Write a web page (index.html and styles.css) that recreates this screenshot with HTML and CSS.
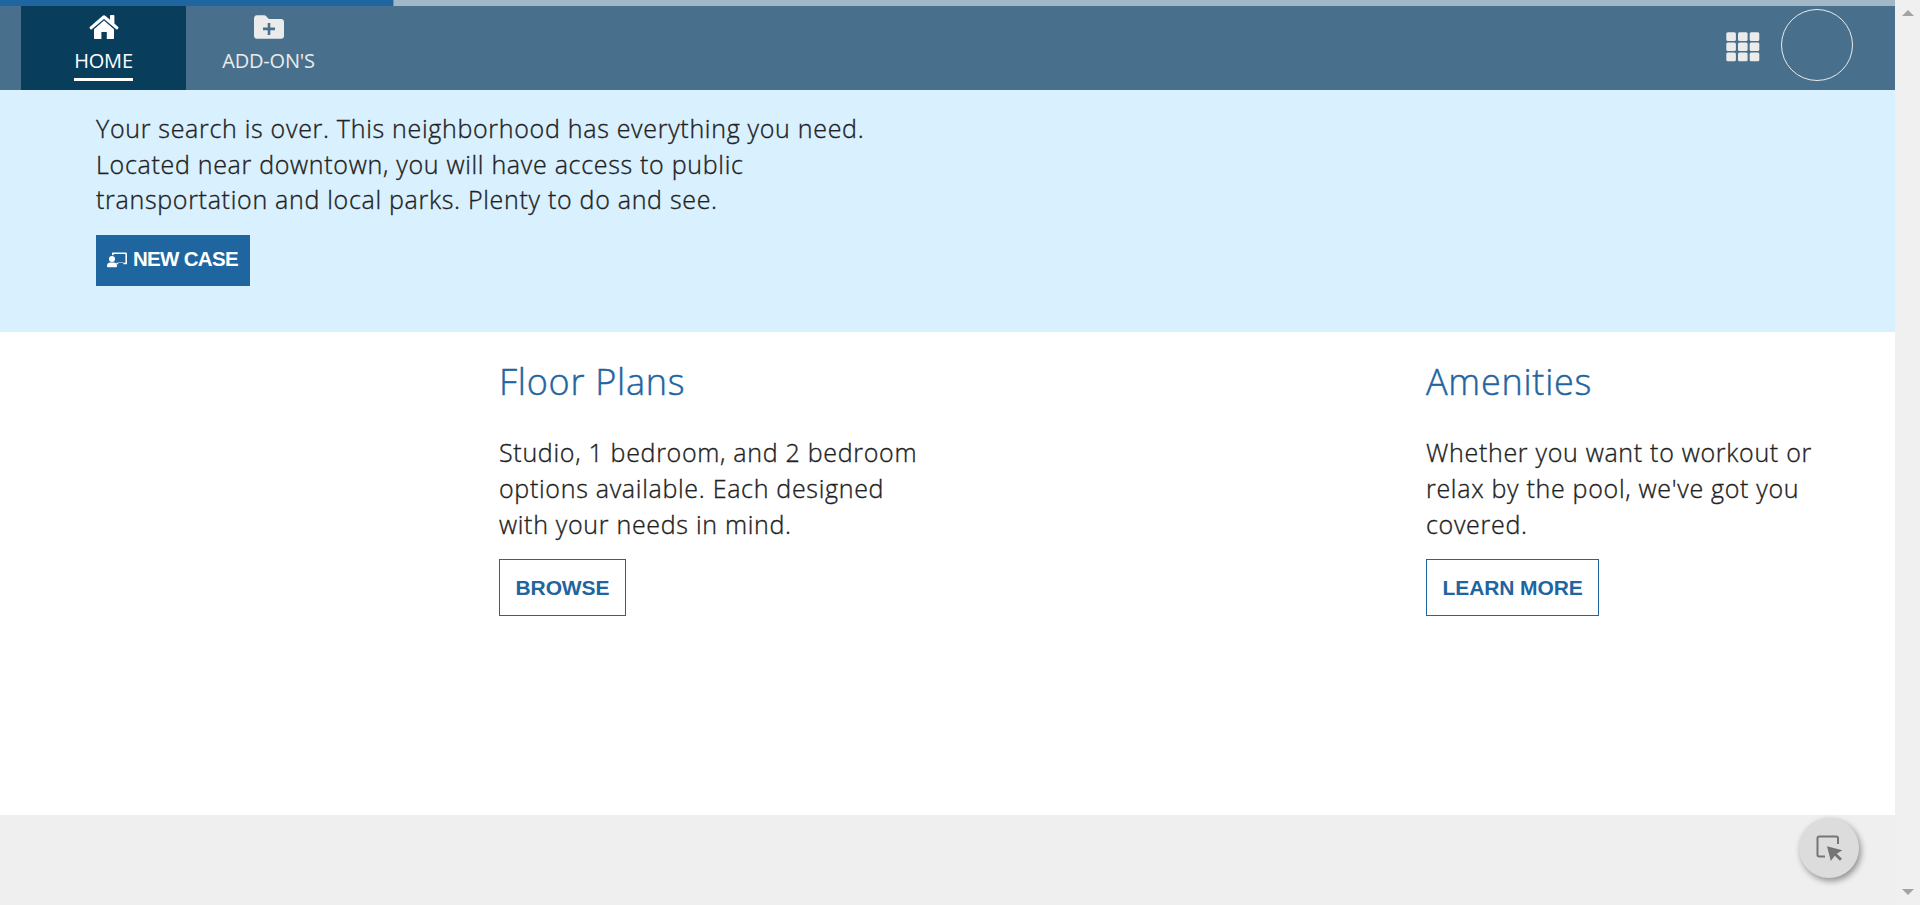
FILE: index.html
```html
<!DOCTYPE html>
<html lang="en">
<head>
<meta charset="utf-8">
<title>Home</title>
<link rel="stylesheet" href="styles.css">
</head>
<body>
<div class="page">
  <div class="progress"><div class="progress-bar"></div></div>
  <header class="nav">
    <nav class="tabs">
      <a class="tab tab-active">
        <svg class="tab-icon" width="30" height="24" viewBox="0 0 30 24" fill="currentColor"><path d="M15 0.2 Q15.8 0.2 16.6 0.9 L21 4.7 V0.8 Q21 0 21.8 0 H24.6 Q25.4 0 25.4 0.8 V8.6 L29.2 11.9 Q29.9 12.5 29.3 13.2 L28.5 14.2 Q27.9 14.9 27.2 14.3 L15 3.9 L2.8 14.3 Q2.1 14.9 1.5 14.2 L0.7 13.2 Q0.1 12.5 0.8 11.9 L13.4 0.9 Q14.2 0.2 15 0.2 Z"/><path d="M15 5.6 L25 14.2 V23.2 Q25 24 24.2 24 H17.8 V17 H12.4 V24 H5.8 Q5 24 5 23.2 V14.2 Z"/></svg>
        <span class="tab-label">HOME</span>
      </a>
      <a class="tab">
        <svg class="tab-icon" width="30" height="24" viewBox="0 0 30 24" fill="currentColor" fill-rule="evenodd"><path d="M3 0.3 H10.4 Q11.4 0.3 12 1 L14.8 4 H27 Q30 4 30 7 V20.7 Q30 23.7 27 23.7 H3 Q0 23.7 0 20.7 V3.3 Q0 0.3 3 0.3 Z M13.7 8 V12.5 H9 V15.2 H13.7 V20 H16.3 V15.2 H21 V12.5 H16.3 V8 Z"/></svg>
        <span class="tab-label">ADD-ON'S</span>
      </a>
    </nav>
    <div class="tools">
      <svg width="34" height="30" viewBox="0 0 34 30" fill="#ebebeb"><rect x="0.3" y="0.3" width="9.6" height="8.6" rx="1.5"/><rect x="12" y="0.3" width="9.6" height="8.6" rx="1.5"/><rect x="23.7" y="0.3" width="9.6" height="8.6" rx="1.5"/><rect x="0.3" y="10.4" width="9.6" height="8.6" rx="1.5"/><rect x="12" y="10.4" width="9.6" height="8.6" rx="1.5"/><rect x="23.7" y="10.4" width="9.6" height="8.6" rx="1.5"/><rect x="0.3" y="20.6" width="9.6" height="8.6" rx="1.5"/><rect x="12" y="20.6" width="9.6" height="8.6" rx="1.5"/><rect x="23.7" y="20.6" width="9.6" height="8.6" rx="1.5"/></svg>
      <div class="avatar"></div>
    </div>
  </header>
  <section class="hero">
    <p class="copy">Your search is over. This neighborhood has everything you need.<br>Located near downtown, you will have access to public<br>transportation and local parks. Plenty to do and see.</p>
    <button class="btn btn-primary">
      <svg width="20" height="16" viewBox="0 0 20 16" fill="currentColor"><path d="M5.5 0.5 H18.6 Q20 0.5 20 1.9 V12.2 H16.3 V10.3 H11.2 V12.2 H9.4 V10.8 H18.4 V2 H6.6 V3.6 Q6 3.1 5 3 V1 Q5 0.5 5.5 0.5 Z"/><circle cx="5" cy="7" r="3"/><path d="M3.3 10.6 H6.7 Q10 10.6 10 14.3 Q10 15.2 9.1 15.2 H0.9 Q0 15.2 0 14.3 Q0 10.6 3.3 10.6 Z"/></svg>
      <span>NEW CASE</span>
    </button>
  </section>
  <main class="features">
    <article class="feature">
      <h2 class="feature-title">Floor Plans</h2>
      <p class="copy">Studio, 1 bedroom, and 2 bedroom<br>options available. Each designed<br>with your needs in mind.</p>
      <button class="btn btn-outline">BROWSE</button>
    </article>
    <article class="feature">
      <h2 class="feature-title">Amenities</h2>
      <p class="copy">Whether you want to workout or<br>relax by the pool, we've got you<br>covered.</p>
      <button class="btn btn-outline">LEARN MORE</button>
    </article>
  </main>
  <footer class="footer">
    <div class="fab">
      <svg width="27" height="27" viewBox="0 0 27 27"><path d="M9 21.5 H3.2 Q1.5 21.5 1.5 19.8 V3.2 Q1.5 1.5 3.2 1.5 H20.3 Q22 1.5 22 3.2 V9" fill="none" stroke="#757575" stroke-width="2"/><path d="M11 11.3 L26.3 15.3 L20.8 18.7 L26 23.7 L23.9 25.8 L18.8 20.7 L14.8 26 Z" fill="#757575"/></svg>
    </div>
  </footer>
</div>
<div class="scrollbar">
  <svg width="12" height="6" viewBox="0 0 12 6"><path d="M0 6 L6 0 L12 6 Z" fill="#a3a3a3"/></svg>
  <svg width="12" height="6" viewBox="0 0 12 6"><path d="M0 0 L6 6 L12 0 Z" fill="#a3a3a3"/></svg>
</div>
</body>
</html>
```
FILE: styles.css
```css
* { box-sizing: border-box; }
body {
  margin: 0;
  height: 905px;
  display: flex;
  overflow: hidden;
  font-family: "Open Sans", "Noto Sans", sans-serif;
  color: #212121;
  background: #fff;
}
.page { width: 1895px; display: flex; flex-direction: column; }
.progress { height: 6px; background: #a3b8c7; }
.progress-bar { width: 394px; height: 6px; background: #1f659f; border-right: 1px solid #7593a8; }
.nav {
  height: 84px;
  padding: 0 42px 0 21px;
  display: flex;
  justify-content: space-between;
  background: #48708c;
}
.tabs { display: flex; }
.tab {
  width: 165px;
  padding: 9px 0 0;
  display: flex;
  flex-direction: column;
  align-items: center;
  color: #ebebeb;
}
.tab-active { color: #fff; background: #083e5c; }
.tab-icon { display: block; }
.tab-label {
  margin-top: 8px;
  height: 34px;
  font-size: 20px;
  line-height: 28px;
  letter-spacing: -0.2px;
}
.tab-active .tab-label { border-bottom: 3px solid #fff; }
.tools { display: flex; align-items: flex-start; gap: 21px; }
.tools svg { margin-top: 26px; }
.avatar { width: 72px; height: 72px; margin-top: 3px; border: 1px solid #ebebeb; border-radius: 50%; }
.hero { height: 242px; padding: 21px 96px 0; background: #d9f0ff; }
.copy {
  margin: 0 0 17px;
  font-size: 25px;
  font-weight: 300;
  line-height: 36px;
  letter-spacing: 0.7px;
  -webkit-text-stroke: 0.35px currentColor;
  white-space: nowrap;
}
.hero .copy { line-height: 35.6px; margin-bottom: 17px; }
.btn { display: flex; font-family: "Liberation Sans", Arial, sans-serif; font-weight: 700; font-size: 21px; border: 0; }
.btn-primary {
  width: 154px;
  height: 51px;
  padding: 12px 0 0 11px;
  gap: 6px;
  align-items: flex-start;
  color: #fff;
  background: #1f659f;
  font-size: 20.5px;
  letter-spacing: -0.7px;
  line-height: 24px;
  white-space: nowrap;
}
.btn-primary svg { margin-top: 5px; flex: none; }
.btn-outline {
  height: 57px;
  padding: 0 15.5px;
  align-items: center;
  color: #1f659f;
  background: #fff;
  border: 1px solid #1f659f;
  letter-spacing: -0.1px;
}
.features {
  height: 483px;
  padding: 25px 0 0 499px;
  display: grid;
  grid-template-columns: 927px 1fr;
}
.feature-title {
  margin: 0 0 28px;
  font-size: 36px;
  line-height: 49px;
  font-weight: 300;
  letter-spacing: 0.75px;
  -webkit-text-stroke: 0.45px currentColor;
  color: #1f659f;
}
.footer { height: 90px; padding: 3px 36px 0 0; display: flex; justify-content: flex-end; background: #efefef; }
.fab {
  width: 60px;
  height: 60px;
  display: flex;
  align-items: center;
  justify-content: center;
  border-radius: 50%;
  background: #dcdcdc;
  box-shadow: 2px 3px 6px rgba(0, 0, 0, 0.4);
}
.scrollbar {
  width: 25px;
  padding: 10px 0;
  display: flex;
  flex-direction: column;
  justify-content: space-between;
  align-items: center;
  background: #f0f0f0;
}
```
